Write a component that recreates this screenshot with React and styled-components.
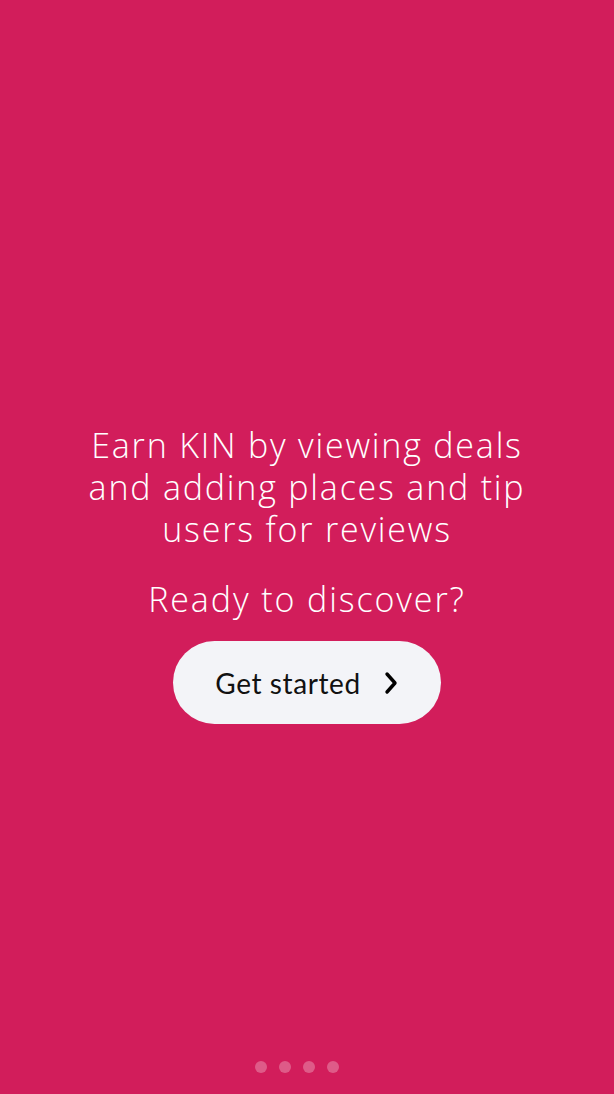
import React from "react";
import styled, { createGlobalStyle } from "styled-components";

const GlobalStyle = createGlobalStyle`
  html, body {
    margin: 0;
    padding: 0;
    background: #d21d5b;
  }
  * {
    box-sizing: border-box;
  }
`;

const App = () => {
  const dots = [0, 1, 2, 3];
  return (
    <Screen>
      <GlobalStyle />
      <Content>
        <Headline>
          Earn KIN by viewing deals
          <br />
          and adding places and tip
          <br />
          users for reviews
        </Headline>
        <Question>Ready to discover?</Question>
        <StartButton>
          <span>Get started</span>
          <Chevron viewBox="0 0 16 26">
            <path d="M4 4l8 9-8 9" />
          </Chevron>
        </StartButton>
      </Content>
      <Dots>
        {dots.map((d) => (
          <Dot key={d} />
        ))}
      </Dots>
    </Screen>
  );
};

const Screen = styled.div`
  display: flex;
  flex-direction: column;
  width: 614px;
  height: 1094px;
  background-color: #d21d5b;
  font-family: "Open Sans", Lato, sans-serif;
`;

const Content = styled.div`
  flex: 1;
  display: flex;
  flex-direction: column;
  align-items: center;
  padding-top: 424px;
`;

const Headline = styled.p`
  margin: 0;
  color: #fff;
  font-size: 34px;
  font-weight: 300;
  line-height: 42px;
  letter-spacing: 1.8px;
  text-align: center;
  white-space: nowrap;
`;

const Question = styled(Headline)`
  margin-top: 28px;
  letter-spacing: 1.9px;
`;

const StartButton = styled.button`
  display: flex;
  align-items: center;
  justify-content: center;
  gap: 22px;
  margin-top: 21px;
  width: 268px;
  height: 83px;
  border: none;
  border-radius: 42px;
  background-color: #f3f4f8;
  color: #111;
  font-family: Lato, "Open Sans", sans-serif;
  font-size: 28px;
  font-weight: 400;
  letter-spacing: 0.6px;
  padding: 0;
`;

const Chevron = styled.svg`
  width: 16px;
  height: 26px;
  fill: none;
  stroke: #000;
  stroke-width: 3.4;
  stroke-linecap: round;
  stroke-linejoin: round;
`;

const Dots = styled.div`
  display: flex;
  justify-content: center;
  gap: 12px;
  padding: 0 20px 21px 0;
`;

const Dot = styled.span`
  width: 12px;
  height: 12px;
  border-radius: 50%;
  background-color: rgba(255, 255, 255, 0.28);
`;

export default App;
